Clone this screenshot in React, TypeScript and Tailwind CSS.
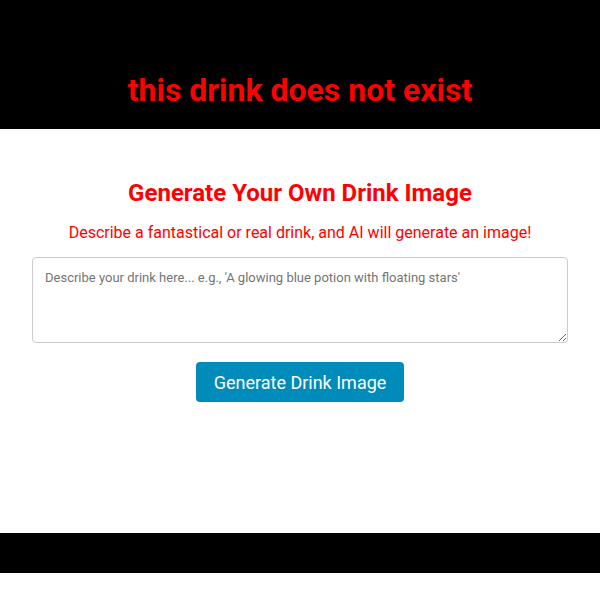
import React from "react";

export default function App() {
  return (
    <div className="min-h-[600px] bg-white font-['Roboto',sans-serif]">
      <header className="bg-black h-[129px] flex items-center justify-center pt-[51px]">
        <h1 className="text-[#ff0000] text-[32px] font-bold leading-none">this drink does not exist</h1>
      </header>
      <main className="h-[404px] flex flex-col items-center pt-[48px] px-[32px]">
        <h2 className="text-[#ff0000] text-[24px] font-bold leading-[32px]">Generate Your Own Drink Image</h2>
        <p className="text-[#ff0000] text-[16px] leading-[24px] mt-[12px]">
          Describe a fantastical or real drink, and AI will generate an image!
        </p>
        <textarea
          className="mt-[12px] w-full h-[86px] border border-[#cccccc] rounded-[4px] px-[12px] py-[11px] text-[13px] leading-[18px] placeholder:text-[#757575] resize-y"
          placeholder="Describe your drink here... e.g., 'A glowing blue potion with floating stars'"
        />
        <button className="mt-[19px] w-[208px] h-[40px] bg-[#008CBA] text-white text-[18px] rounded-[4px]">
          Generate Drink Image
        </button>
      </main>
      <footer className="bg-black h-[40px]" />
    </div>
  );
}
